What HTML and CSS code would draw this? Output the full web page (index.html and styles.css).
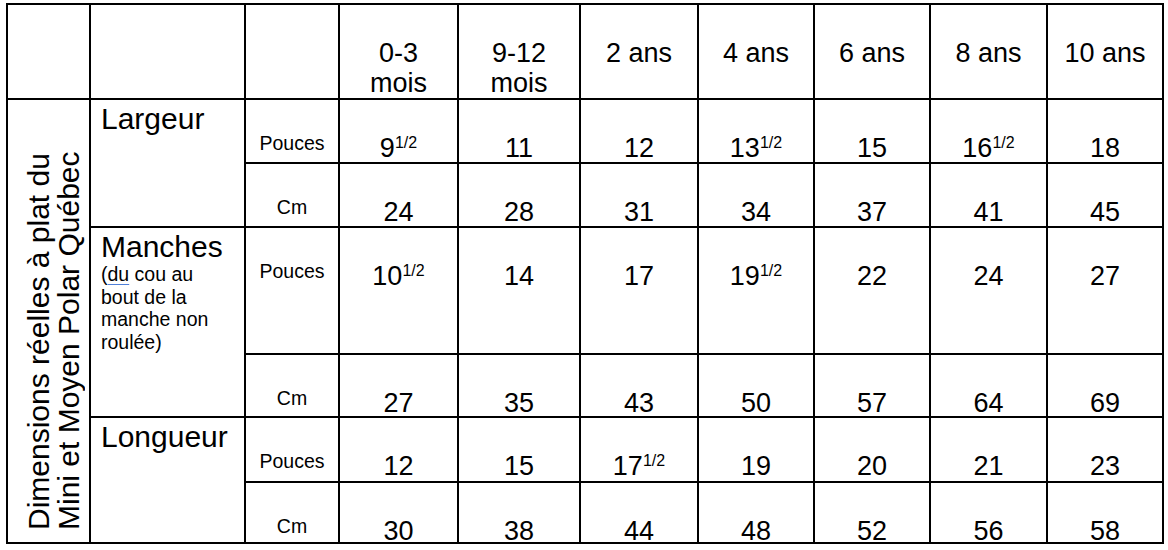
FILE: index.html
```html
<!DOCTYPE html>
<html lang="fr">
<head>
<meta charset="utf-8">
<title>Dimensions</title>
<link rel="stylesheet" href="styles.css">
</head>
<body>
<div class="sheet">
  <div class="c"></div>
  <div class="c"></div>
  <div class="c"></div>
  <div class="c h">0-3<br>mois</div>
  <div class="c h">9-12<br>mois</div>
  <div class="c h">2 ans</div>
  <div class="c h">4 ans</div>
  <div class="c h">6 ans</div>
  <div class="c h">8 ans</div>
  <div class="c h">10 ans</div>

  <div class="c side"><div class="vert">Dimensions réelles à plat du<br>Mini et Moyen Polar Québec</div></div>
  <div class="c lbl span2">Largeur</div>
  <div class="c unit">Pouces</div>
  <div class="c v">9<span class="fr">1/2</span></div>
  <div class="c v">11</div>
  <div class="c v">12</div>
  <div class="c v">13<span class="fr">1/2</span></div>
  <div class="c v">15</div>
  <div class="c v">16<span class="fr">1/2</span></div>
  <div class="c v">18</div>

  <div class="c unit">Cm</div>
  <div class="c v">24</div>
  <div class="c v">28</div>
  <div class="c v">31</div>
  <div class="c v">34</div>
  <div class="c v">37</div>
  <div class="c v">41</div>
  <div class="c v">45</div>

  <div class="c lbl span2">Manches<span class="sub">(<span class="spell">du</span> cou au<br>bout de la<br>manche non<br>roulée)</span></div>
  <div class="c unit">Pouces</div>
  <div class="c v">10<span class="fr">1/2</span></div>
  <div class="c v">14</div>
  <div class="c v">17</div>
  <div class="c v">19<span class="fr">1/2</span></div>
  <div class="c v">22</div>
  <div class="c v">24</div>
  <div class="c v">27</div>

  <div class="c unit">Cm</div>
  <div class="c v">27</div>
  <div class="c v">35</div>
  <div class="c v">43</div>
  <div class="c v">50</div>
  <div class="c v">57</div>
  <div class="c v">64</div>
  <div class="c v">69</div>

  <div class="c lbl span2">Longueur</div>
  <div class="c unit">Pouces</div>
  <div class="c v">12</div>
  <div class="c v">15</div>
  <div class="c v">17<span class="fr">1/2</span></div>
  <div class="c v">19</div>
  <div class="c v">20</div>
  <div class="c v">21</div>
  <div class="c v">23</div>

  <div class="c unit">Cm</div>
  <div class="c v">30</div>
  <div class="c v">38</div>
  <div class="c v">44</div>
  <div class="c v">48</div>
  <div class="c v">52</div>
  <div class="c v">56</div>
  <div class="c v">58</div>
</div>
</body>
</html>
```

FILE: styles.css
```css
html, body {
  margin: 0;
  padding: 0;
  background: #ffffff;
}

body {
  font-family: "Liberation Sans", Arial, sans-serif;
  color: #000000;
}

.sheet {
  display: grid;
  grid-template-columns: 81px 153px 92px 117px 120px 116px 114px 114px 115px 114px;
  grid-template-rows: 93px 62px 62px 125px 61px 63px 59px;
  gap: 2px;
  padding: 2px;
  background: #000000;
  width: max-content;
  margin: 3px 0 0 6px;
}

.c {
  background: #ffffff;
  min-width: 0;
}

.h {
  text-align: center;
  font-size: 27px;
  line-height: 30px;
  padding-top: 33px;
}

.side {
  grid-row: span 6;
  display: flex;
  padding: 0 0 12px 16px;
}

.vert {
  writing-mode: vertical-rl;
  transform: rotate(180deg);
  font-size: 30px;
  line-height: 30px;
  white-space: nowrap;
}

.span2 {
  grid-row: span 2;
}

.lbl {
  font-size: 30px;
  line-height: 33px;
  padding: 2px 4px 0 10px;
}

.sub {
  display: block;
  font-size: 19.5px;
  line-height: 22.5px;
}

.spell {
  text-decoration: underline;
  text-decoration-color: #4f7fd8;
  text-decoration-thickness: 1px;
  text-underline-offset: 3px;
}

.unit {
  text-align: center;
  font-size: 19.5px;
  line-height: 22px;
  padding-top: 32px;
}

.v {
  text-align: center;
  font-size: 27px;
  line-height: 30px;
  padding-top: 33px;
}

.fr {
  font-size: 16px;
  line-height: 0;
  vertical-align: 9px;
}
```
